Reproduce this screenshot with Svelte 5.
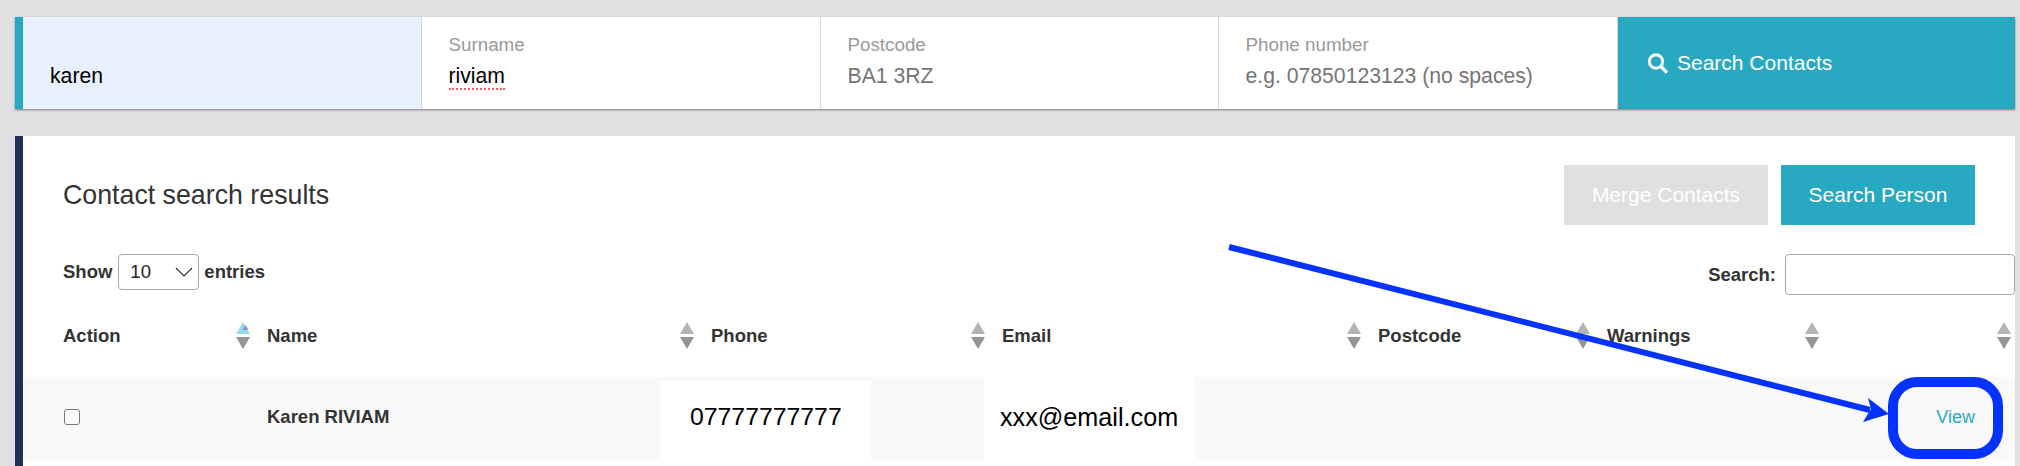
<script>
	const filters = [
		{ label: '', value: 'karen', autofill: true },
		{ label: 'Surname', value: 'riviam', misspelt: true },
		{ label: 'Postcode', placeholder: 'BA1 3RZ' },
		{ label: 'Phone number', placeholder: 'e.g. 07850123123 (no spaces)' }
	];
	const columns = ['Action', 'Name', 'Phone', 'Email', 'Postcode', 'Warnings', ''];
</script>

<div class="page">
	<form class="search-bar">
		{#each filters as f}
			<div class="field" class:autofill={f.autofill}>
				<span class="field-label">{f.label}</span>
				{#if f.placeholder}
					<span class="field-value placeholder">{f.placeholder}</span>
				{:else}
					<span class="field-value"><span class:misspelt={f.misspelt}>{f.value}</span></span>
				{/if}
			</div>
		{/each}
		<div class="search-btn">
			<svg width="22" height="21" viewBox="0 0 22 21" fill="none" stroke="#fff">
				<circle cx="9" cy="8.5" r="6.7" stroke-width="3" />
				<path d="M13.8 13.4 20 19.6" stroke-width="3.4" />
			</svg>
			<span>Search Contacts</span>
		</div>
	</form>

	<section class="panel">
		<header class="panel-head">
			<h2>Contact search results</h2>
			<div class="actions">
				<span class="btn disabled">Merge Contacts</span>
				<span class="btn">Search Person</span>
			</div>
		</header>

		<div class="controls">
			<div class="length">
				<span>Show</span>
				<div class="select">
					<span>10</span>
					<svg width="18" height="10" viewBox="0 0 18 10" fill="none" stroke="#333" stroke-width="1.2">
						<path d="M1 1l8 8 8-8" />
					</svg>
				</div>
				<span>entries</span>
			</div>
			<div class="filter">
				<span>Search:</span>
				<div class="filter-input"></div>
			</div>
		</div>

		<div class="table">
			{#each columns as col, i}
				<div class="th">
					<span>{col}</span>
					<svg class="sort" width="14" height="28" viewBox="0 0 14 28">
						{#if i === 0}
							<path d="M7 0 14 12H0z" fill="#96dbe4" />
							<path d="M9.5 3 12.5 8H6.5z" fill="#8a8fe6" />
						{:else}
							<path d="M7 0 14 12H0z" fill="#b4b4b4" />
						{/if}
						<path d="M0 15h14L7 27z" fill="#959595" />
					</svg>
				</div>
			{/each}
			<div class="td action"><span class="check"></span></div>
			<div class="td strong">Karen RIVIAM</div>
			<div class="td"><span class="paste phone">07777777777</span></div>
			<div class="td"><span class="paste email">xxx@email.com</span></div>
			<div class="td"></div>
			<div class="td"></div>
			<div class="td view"><span>View</span></div>
		</div>
	</section>

	<svg class="annotation" width="2020" height="466" viewBox="0 0 2020 466">
		<path d="M1229 247 1870 410" stroke="#0433ff" stroke-width="6" fill="none" />
		<path d="M1889 414 1868 398 1871 409 1863 422z" fill="#0433ff" />
		<rect x="1893" y="382" width="105" height="72" rx="24" fill="none" stroke="#0433ff" stroke-width="10" />
	</svg>
</div>

<style>
	:global(body) {
		background: #e0e0e0;
		overflow: hidden;
	}

	.page {
		position: relative;
		width: 2020px;
		height: 466px;
		padding: 17px 5px 0 15px;
		box-sizing: border-box;
		font-family: 'Liberation Sans', Arial, sans-serif;
		color: #333;
	}

	.search-bar {
		display: grid;
		grid-template-columns: 399px 399px 398px 399px 1fr;
		height: 92px;
		margin: 0;
		border-left: 8px solid #29a9c1;
		background: #fff;
		box-shadow: 0 1px 2px rgba(0, 0, 0, 0.45);
	}

	.field {
		display: flex;
		flex-direction: column;
		padding: 17px 0 0 26.5px;
		border-right: 1px solid #d6d6d6;
	}

	.field.autofill {
		padding-left: 27px;
		background: #e8f0fe;
	}

	.field-label {
		height: 22px;
		font-size: 18.8px;
		line-height: 22px;
		color: #999;
	}

	.field-value {
		margin-top: 8px;
		font-size: 21.2px;
		line-height: 24px;
		color: #000;
	}

	.placeholder {
		color: #757575;
	}

	.misspelt {
		display: inline-block;
		line-height: 24px;
		border-bottom: 2px dotted #f06060;
	}

	.search-btn {
		display: flex;
		align-items: center;
		gap: 8px;
		padding: 0 0 0 29px;
		background: #29a9c1;
		color: #fff;
		font-size: 21px;
	}

	.panel {
		height: 330px;
		margin-top: 27px;
		border-left: 8px solid #1c3156;
		background: #fff;
	}

	.panel-head {
		display: flex;
		justify-content: space-between;
		align-items: center;
		padding: 29px 40px 0;
	}

	h2 {
		margin: 0;
		font-size: 26.75px;
		font-weight: 400;
	}

	.actions {
		display: flex;
		gap: 13px;
	}

	.btn {
		display: flex;
		align-items: center;
		justify-content: center;
		width: 194px;
		height: 60px;
		padding-bottom: 1px;
		box-sizing: border-box;
		background: #29a9c1;
		color: #fff;
		font-size: 21px;
	}

	.btn.disabled {
		width: 204px;
		background: #e0e0e0;
	}

	.controls {
		display: flex;
		justify-content: space-between;
		align-items: flex-start;
		height: 41px;
		margin-top: 29px;
		padding-left: 40px;
		font-size: 18.5px;
		font-weight: 700;
	}

	.length {
		display: flex;
		align-items: center;
		gap: 6px;
		height: 36px;
	}

	.select {
		display: flex;
		align-items: center;
		justify-content: space-between;
		box-sizing: border-box;
		width: 81px;
		height: 36px;
		margin-right: -1px;
		padding: 0 5px 0 11px;
		border: 1px solid #aaa;
		border-radius: 4px;
		font-weight: 400;
		color: #222;
	}

	.filter {
		display: flex;
		align-items: center;
		gap: 9px;
	}

	.filter-input {
		box-sizing: border-box;
		width: 230px;
		height: 41px;
		border: 1px solid #aaa;
		border-radius: 4px;
	}

	.table {
		display: grid;
		grid-template-columns: 228px 444px 291px 376px 229px 229px 195px;
		grid-template-rows: 82px 83px;
	}

	.th {
		display: flex;
		align-items: center;
		justify-content: space-between;
		padding: 0 1px 0 16px;
		font-size: 18.5px;
		font-weight: 700;
	}

	.th:first-child {
		padding-left: 40px;
	}

	.th:nth-child(7) {
		padding-right: 4px;
	}

	.sort {
		flex: none;
	}

	.td {
		position: relative;
		display: flex;
		align-items: center;
		padding-left: 16px;
		background: #f9f9f9;
		font-size: 18.5px;
	}

	.action {
		padding-left: 41px;
		padding-bottom: 3px;
	}

	.strong {
		padding-bottom: 4px;
		font-weight: 700;
	}

	.check {
		box-sizing: border-box;
		width: 16px;
		height: 16px;
		border: 1.5px solid #777;
		border-radius: 3px;
		background: #fff;
	}

	.paste {
		position: absolute;
		top: 0;
		bottom: 0;
		display: flex;
		align-items: center;
		box-sizing: border-box;
		width: 211px;
		background: #fff;
		color: #000;
		font-size: 25px;
	}

	.phone {
		top: 4px;
		left: -35px;
		padding-left: 30px;
		padding-bottom: 8px;
		font-size: 24.8px;
	}

	.email {
		left: -2px;
		padding-left: 16px;
		padding-bottom: 3px;
		font-size: 25.2px;
	}

	.view {
		justify-content: flex-end;
		padding-right: 40px;
		padding-bottom: 3px;
		font-size: 18px;
		color: #29a9c1;
	}

	.annotation {
		position: absolute;
		top: 0;
		left: 0;
		pointer-events: none;
	}
</style>
